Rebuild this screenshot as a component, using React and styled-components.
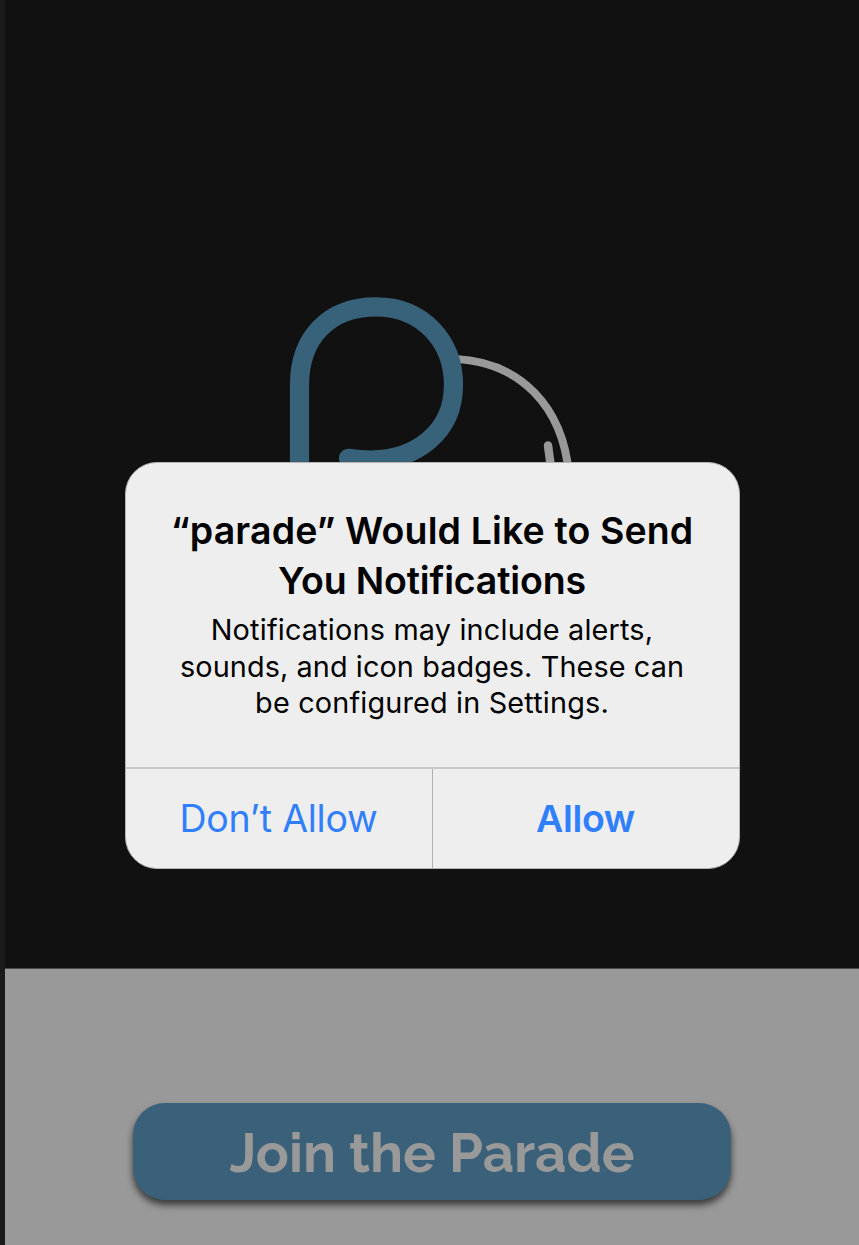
import React from "react";
import styled, { createGlobalStyle } from "styled-components";

const GlobalStyle = createGlobalStyle`
  *, *::before, *::after { box-sizing: border-box; }
  body { margin: 0; background: #111; }
`;

const Screen = styled.main`
  position: relative;
  display: flex;
  flex-direction: column;
  height: 1245px;
  overflow: hidden;
  border-left: 5px solid #1b1b1b;
  background: #111111;
`;

const Hero = styled.section`
  height: 968px;
  flex: none;
  padding: 287px 0 0 275px;
`;

const Logo = styled.svg`
  display: block;
  width: 310px;
  height: 200px;
  fill: none;
  stroke-linecap: round;
`;

const Footer = styled.section`
  flex: 1;
  display: flex;
  justify-content: center;
  align-items: flex-start;
  padding: 134px 0 0;
  border-top: 1px solid #4b494a;
  background: #999999;
`;

const JoinButton = styled.button`
  width: 598px;
  height: 97px;
  margin: 0;
  padding: 2px 0 0;
  border: 0;
  border-radius: 32px;
  background: #3a6179;
  box-shadow: 0 5px 7px rgba(0, 0, 0, 0.62);
  color: #999999;
  font: 700 54.7px/60px Raleway, Lato, sans-serif;
  white-space: nowrap;
`;

const Backdrop = styled.div`
  position: absolute;
  inset: 0;
  display: flex;
  justify-content: center;
  align-items: flex-start;
  padding-top: 462px;
`;

const Dialog = styled.div`
  width: 615px;
  height: 407px;
  display: flex;
  flex-direction: column;
  overflow: hidden;
  border-radius: 32px;
  border: 1px solid #b4b4b4;
  background: #eeeeee;
  color: #000;
  font-family: Inter, sans-serif;
  text-align: center;
`;

const Message = styled.div`
  height: 304px;
  padding-top: 43px;
`;

const Title = styled.h1`
  margin: 0;
  font-size: 37.5px;
  font-weight: 600;
  line-height: 50px;
`;

const Body = styled.p`
  margin: 6px 0 0;
  font-size: 28.8px;
  font-weight: 400;
  line-height: 36.5px;
`;

const Line = styled.span`
  display: block;
  white-space: nowrap;
  letter-spacing: ${(p) => p.$tracking || 0}px;
`;

const Actions = styled.div`
  flex: 1;
  display: flex;
  border-top: 2px solid #c8c8c8;
`;

const Action = styled.button`
  flex: 1;
  margin: 0;
  padding: 1px 0 0;
  border: 0;
  background: transparent;
  color: #307ffb;
  font: ${(p) => (p.$strong ? 600 : 400)} 37.5px/50px Inter, sans-serif;
  letter-spacing: ${(p) => p.$tracking || 0}px;

  & + & { border-left: 1px solid #b0b0b0; }
`;

export default function App() {
  return (
    <>
      <GlobalStyle />
      <Screen>
        <Hero>
          <Logo viewBox="280 287 310 200" aria-hidden="true">
            <path d="M455 359C520 362 563 406 569 475" stroke="#999999" strokeWidth="8" />
            <path d="M548 445.5L552 475" stroke="#999999" strokeWidth="8.5" />
            <path
              d="M299.5 482V385C299.5 336.5 330 306.8 376 306.8C422 306.8 453.5 341 453.5 385C453.5 432 416 460 371 460C362 460 355 459.2 348.5 458.4"
              stroke="#37627a"
              strokeWidth="19.2"
            />
          </Logo>
        </Hero>
        <Footer>
          <JoinButton>Join the Parade</JoinButton>
        </Footer>
        <Backdrop>
          <Dialog role="alertdialog">
            <Message>
              <Title>
                <Line $tracking={0.12}>“parade” Would Like to Send</Line>
                <Line $tracking={-0.15}>You Notifications</Line>
              </Title>
              <Body>
                <Line $tracking={0.2}>Notifications may include alerts,</Line>
                <Line $tracking={0.1}>sounds, and icon badges. These can</Line>
                <Line $tracking={0.18}>be configured in Settings.</Line>
              </Body>
            </Message>
            <Actions>
              <Action $tracking={-0.25}>Don’t Allow</Action>
              <Action $strong $tracking={-0.35}>Allow</Action>
            </Actions>
          </Dialog>
        </Backdrop>
      </Screen>
    </>
  );
}
